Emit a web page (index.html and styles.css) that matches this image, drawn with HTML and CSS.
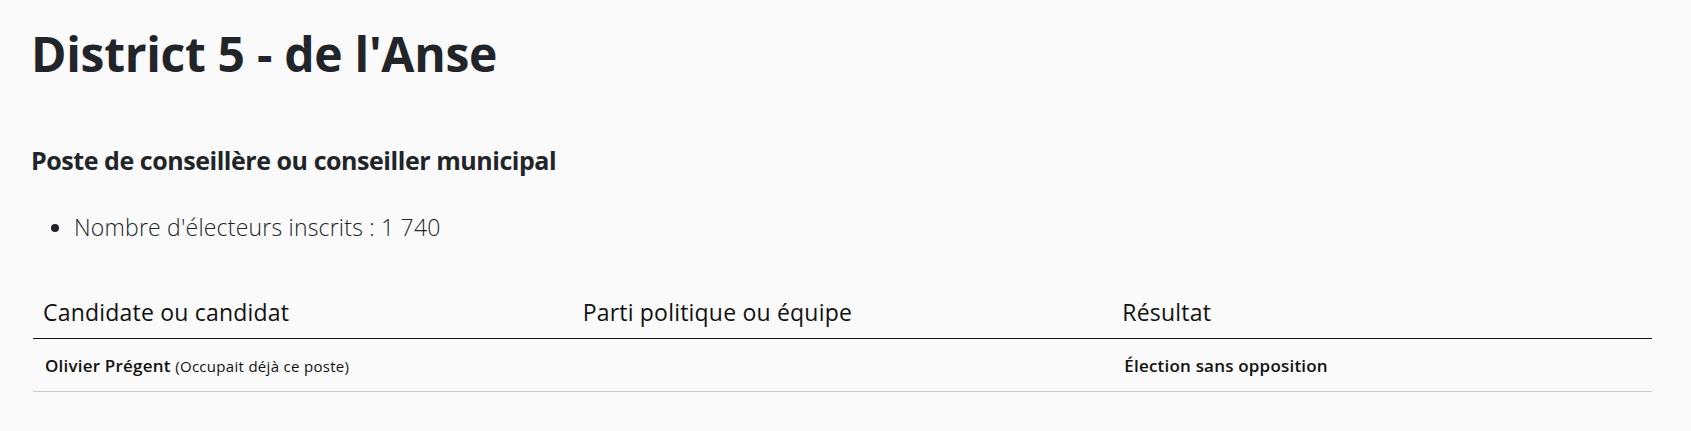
FILE: index.html
```html
<!DOCTYPE html>
<html lang="fr">
<head>
    <meta charset="UTF-8">
    <meta name="viewport" content="width=device-width, initial-scale=1.0">
    <title>District 5 - de l'Anse</title>
    <link rel="stylesheet" href="styles.css">
</head>
<body>
    <div class="container">
        <h1 class="district-title">District 5 - de l'Anse</h1>

        <section class="poste">
            <h2 class="poste-title">Poste de conseillère ou conseiller municipal</h2>
            <ul class="poste-info">
                <li>Nombre d'électeurs inscrits : 1 740</li>
            </ul>

            <table class="results">
                <thead>
                    <tr>
                        <th>Candidate ou candidat</th>
                        <th>Parti politique ou équipe</th>
                        <th>Résultat</th>
                    </tr>
                </thead>
                <tbody>
                    <tr>
                        <td><strong>Olivier Prégent</strong> <small>(Occupait déjà ce poste)</small></td>
                        <td></td>
                        <td><strong>Élection sans opposition</strong></td>
                    </tr>
                </tbody>
            </table>
        </section>
    </div>
</body>
</html>
```

FILE: styles.css
```css
* {
  margin: 0;
  padding: 0;
  box-sizing: border-box;
}

body {
  font-family: 'Open Sans', 'Noto Sans', sans-serif;
  background-color: #fafafa;
  color: #212529;
}

.container {
  width: 1619px;
  margin-left: 33px;
  padding-top: 25px;
}

.district-title {
  margin-left: -2px;
  font-size: 48px;
  font-weight: 700;
  line-height: 58px;
  letter-spacing: -0.3px;
}

.poste {
  margin-top: 61px;
}

.poste-title {
  margin-left: -2px;
  font-size: 25px;
  font-weight: 700;
  line-height: 32px;
  letter-spacing: -0.45px;
}

.poste-info {
  margin-top: 36px;
  padding-left: 41px;
  font-size: 23px;
  font-weight: 300;
  line-height: 30px;
  letter-spacing: 0.2px;
}

.results {
  width: 100%;
  margin-top: 43px;
  border-collapse: collapse;
  table-layout: fixed;
  color: #111;
}

.results th {
  text-align: left;
  font-size: 23px;
  font-weight: 400;
  line-height: 30px;
  letter-spacing: 0.2px;
  padding: 12px 10px 11px;
  border-bottom: 1px solid #111;
}

.results td {
  font-size: 17px;
  line-height: 24px;
  letter-spacing: 0.2px;
  padding: 15px 12px 13px;
  border-bottom: 1px solid #cccccc;
}

.results td strong {
  font-weight: 600;
}

.results td small {
  font-size: 15px;
  line-height: 1;
  letter-spacing: 0.3px;
}
```
